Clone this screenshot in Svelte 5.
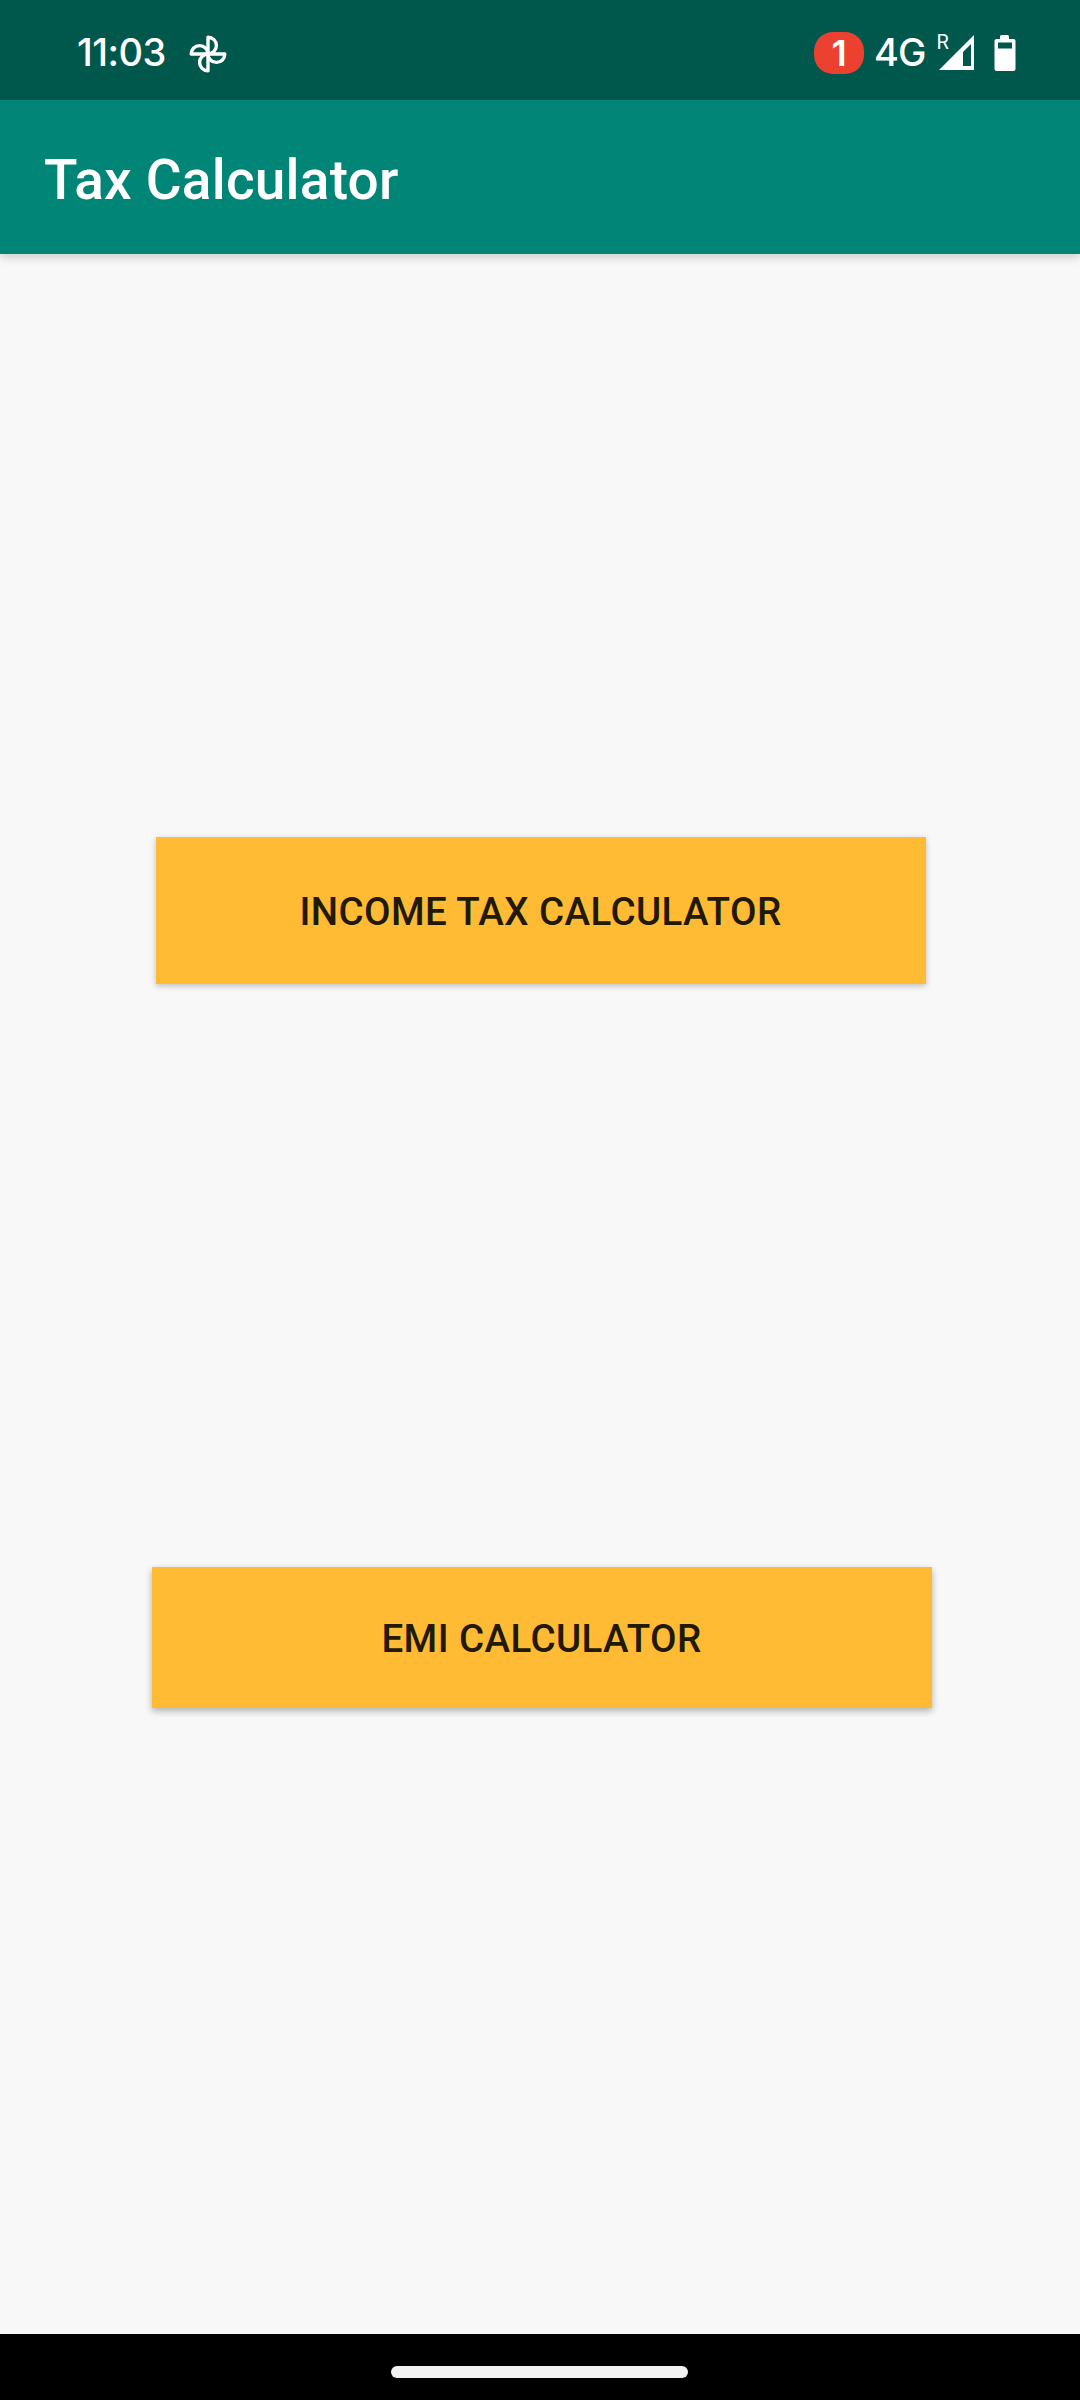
<script>
  const actions = [
    { label: 'Income Tax Calculator', kind: 'income' },
    { label: 'EMI Calculator', kind: 'emi' }
  ];
</script>

<div class="screen">
  <header class="status">
    <span class="time">11:03</span>
    <svg class="pinwheel" width="40" height="40" viewBox="0 0 40 40">
      <g fill="none" stroke="#fff" stroke-width="3.4" stroke-linejoin="round">
        <path d="M20 20V3.200a8.400 8.400 0 0 1 0 16.800" />
        <path d="M20 20h16.800a8.400 8.400 0 0 1-16.800 0" />
        <path d="M20 20v16.800a8.400 8.400 0 0 1 0-16.800" />
        <path d="M20 20H3.200a8.400 8.400 0 0 1 16.800 0" />
      </g>
    </svg>
    <span class="badge">1</span>
    <span class="network">4G</span>
    <svg class="signal" width="36" height="36" viewBox="0 0 36 36">
      <path fill="#fff" fill-rule="evenodd" d="M0 35L35 0v35zM24 17v14h8V9z" />
      <text x="-2.4" y="14.4">R</text>
    </svg>
    <svg class="battery" width="22" height="36" viewBox="0 0 22 36">
      <path
        fill="#fff"
        fill-rule="evenodd"
        d="M6 4V1.500Q6 0 7.500 0h6Q15 0 15 1.500V4h4.500Q21.500 4 21.500 6v28q0 2-2 2h-17q-2 0-2-2V6q0-2 2-2zM4 7.500v6h14v-6z"
      />
    </svg>
  </header>

  <div class="appbar"><h1>Tax Calculator</h1></div>

  <main>
    {#each actions as action}
      <button class={action.kind}>{action.label}</button>
    {/each}
  </main>

  <footer><div class="handle"></div></footer>
</div>

<style>
  :global(body) {
    margin: 0;
  }

  .screen {
    width: 1080px;
    height: 2400px;
    display: flex;
    flex-direction: column;
    background: #f8f8f8;
    font-family: Roboto, 'Liberation Sans', sans-serif;
    overflow: hidden;
  }

  .status {
    height: 100px;
    flex: none;
    box-sizing: border-box;
    padding: 4px 64px 0 77px;
    display: flex;
    align-items: center;
    background: #00574b;
    color: #fff;
    font: 500 38px/1 Inter, sans-serif;
  }

  .time {
    width: 111px;
    letter-spacing: -0.5px;
  }

  .pinwheel {
    margin-top: 3px;
  }

  .badge {
    width: 50px;
    height: 42px;
    margin: 2px 10px 0 auto;
    border-radius: 19px;
    background: #ec4131;
    font-size: 36px;
    font-weight: 600;
    line-height: 42px;
    text-align: center;
  }

  .network {
    width: 65px;
    letter-spacing: -1px;
  }

  .signal {
    margin: 2px 19px 0 0;
    overflow: visible;
  }

  .signal text {
    font: 400 20px Roboto, sans-serif;
    fill: #fff;
  }

  .battery {
    margin-top: 2px;
  }

  .appbar {
    height: 154px;
    flex: none;
    box-sizing: border-box;
    padding: 6px 44px 0;
    display: flex;
    align-items: center;
    background: #008577;
    box-shadow: 0 4px 8px rgba(0, 0, 0, 0.16);
  }

  h1 {
    margin: 0;
    color: #fff;
    font-size: 55px;
    font-weight: 500;
    line-height: 64px;
    letter-spacing: 0.2px;
  }

  main {
    flex: 1;
    display: flex;
    flex-direction: column;
  }

  button {
    border: 0;
    background: #ffbb33;
    color: #211903;
    font: 500 38.5px/46px Roboto, 'Liberation Sans', sans-serif;
    letter-spacing: 0.4px;
    text-transform: uppercase;
  }

  .income {
    width: 770px;
    height: 147px;
    margin: 583px 0 0 155.5px;
    padding: 2px 0 0;
    box-shadow: 0 2px 6px rgba(0, 0, 0, 0.24);
  }

  .emi {
    width: 780px;
    height: 141px;
    margin: 583px 0 0 151.5px;
    padding: 2px 0 0;
    box-shadow: 0 3px 7px rgba(0, 0, 0, 0.3);
  }

  footer {
    height: 66px;
    flex: none;
    display: flex;
    align-items: center;
    justify-content: center;
    background: #000;
  }

  .handle {
    width: 297px;
    height: 12px;
    margin: 10px 1px 0 0;
    border-radius: 6px;
    background: #f2f2f2;
  }
</style>
